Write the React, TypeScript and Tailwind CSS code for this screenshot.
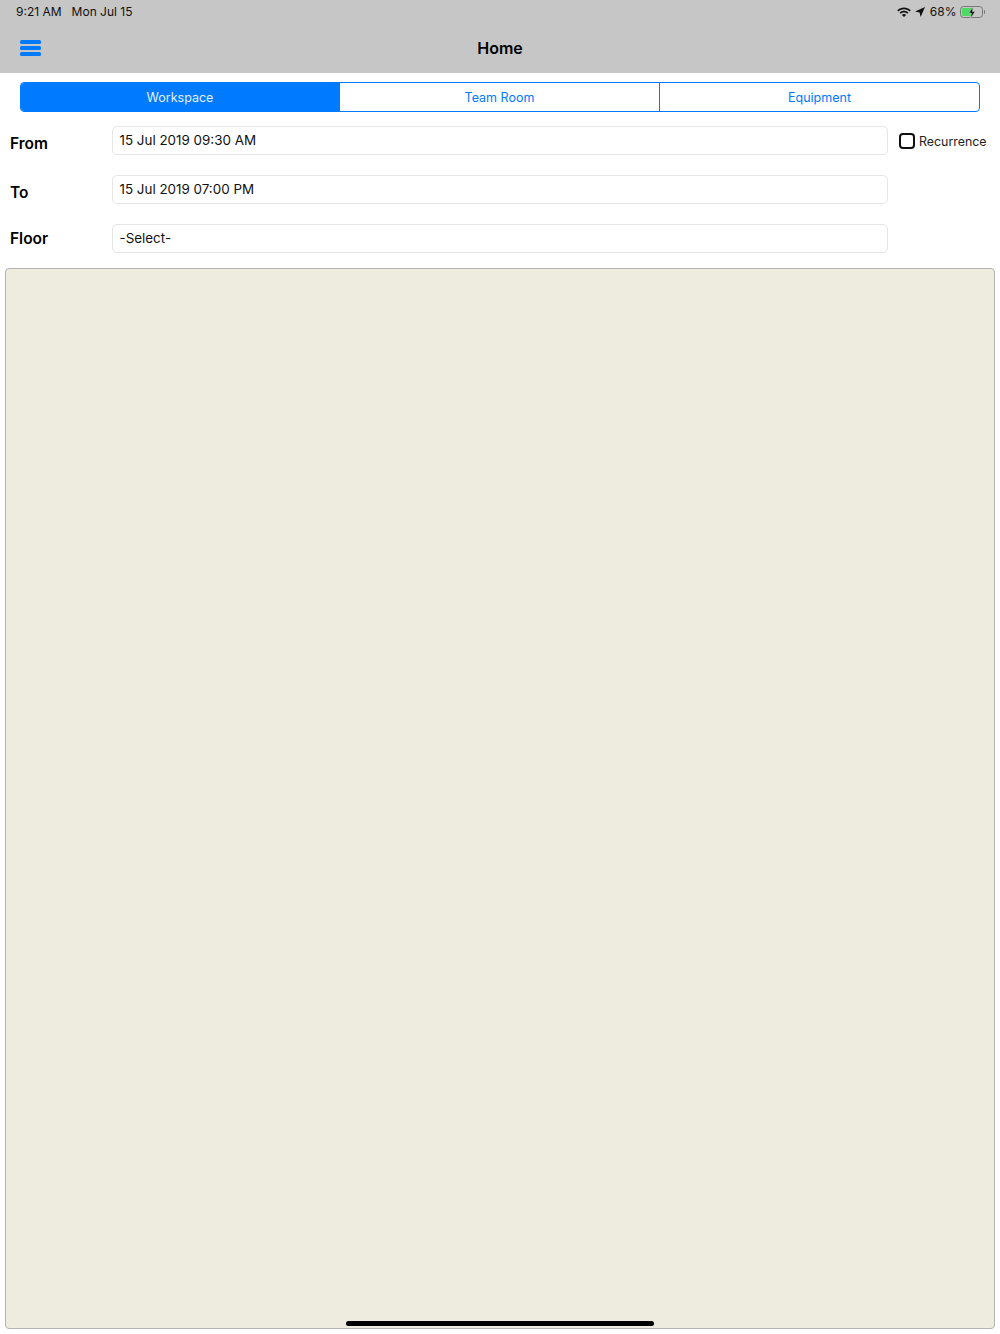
const font = { fontFamily: 'Inter, "Liberation Sans", sans-serif' };

function Field({ label, value, labelClass }: { label: string; value: string; labelClass: string }) {
  return (
    <div className="flex h-[29px] items-center">
      <div className={`w-[112px] pl-[10px] text-[15.5px] font-semibold leading-[20px] text-black ${labelClass}`}>{label}</div>
      <div className="flex h-[29px] w-[776px] items-center rounded-[5px] border border-[#e6e6e6] bg-white pl-[6.5px] text-[13.4px] text-[#111]">
        {value}
      </div>
    </div>
  );
}

export default function App() {
  return (
    <div style={font} className="relative h-[1334px] w-[1000px] overflow-hidden bg-white">
      <header className="h-[73px] bg-[#c6c6c6]">
        <div className="flex h-[24px] items-center justify-between pl-[16px] pr-[15px] text-[12px] text-[#111]">
          <div className="flex gap-[10px]">
            <span>9:21 AM</span>
            <span>Mon Jul 15</span>
          </div>
          <div className="flex items-center">
            <svg width="14" height="10" viewBox="0 0 14 10" className="mr-[4px]">
              <path d="M0.3 3.3C4 -0.4 10 -0.4 13.7 3.3L12.6 4.5C9.5 1.5 4.5 1.5 1.4 4.5Z" fill="#111" />
              <path d="M2.6 5.6C5 3.2 9 3.2 11.4 5.6L10.3 6.8C8.5 5 5.5 5 3.7 6.8Z" fill="#111" />
              <path d="M4.9 7.9C6 6.8 8 6.8 9.1 7.9L7 10Z" fill="#111" />
            </svg>
            <svg width="10" height="10" viewBox="0 0 10 10" className="mr-[5px]">
              <path d="M10 0L5.6 10L4.6 5.4L0 4.4Z" fill="#111" />
            </svg>
            <span className="mr-[3px]">68%</span>
            <div className="relative flex h-[12px] w-[23px] items-center rounded-[3.5px] border border-[#777] p-[1px]">
              <div className="h-full w-[11px] rounded-[1px] bg-[#4cd964]" />
              <svg width="8" height="11" viewBox="0 0 8 11" className="absolute left-[7px] top-0">
                <path d="M5 0L0.8 6H3.4L2.6 11L7.2 4.6H4.4Z" fill="#111" stroke="#c6c6c6" strokeWidth="0.6" />
              </svg>
            </div>
            <div className="ml-[1px] h-[4px] w-[1.5px] rounded-r-sm bg-[#777]" />
          </div>
        </div>
        <div className="relative flex h-[49px] -translate-y-[1px] items-center justify-center">
          <span className="text-[16px] font-semibold text-black">Home</span>
          <div className="absolute left-[20px] top-[17px] flex h-[16px] w-[21px] flex-col justify-between">
            <div className="h-[4px] rounded-[1.5px] bg-[#007aff]" />
            <div className="h-[4px] rounded-[1.5px] bg-[#007aff]" />
            <div className="h-[4px] rounded-[1.5px] bg-[#007aff]" />
          </div>
        </div>
      </header>

      <div className="mx-[20px] mt-[9px] flex h-[30px] overflow-hidden rounded-[4px] border border-[#007aff] text-[12.5px]">
        <div className="flex w-[318px] items-center justify-center bg-[#007aff] pt-[2px] text-[#e4f0ff]">Workspace</div>
        <div className="flex w-[320px] items-center justify-center border-l border-[#007aff] pt-[2px] text-[#007aff]">Team Room</div>
        <div className="flex flex-1 items-center justify-center border-l border-[#007aff] pt-[2px] text-[#007aff]">Equipment</div>
      </div>

      <div className="relative mt-[14px] flex flex-col gap-[20px]">
        <Field label="From" value="15 Jul 2019 09:30 AM" labelClass="translate-y-[3px]" />
        <Field label="To" value="15 Jul 2019 07:00 PM" labelClass="translate-y-[3px]" />
        <Field label="Floor" value="-Select-" labelClass="" />
        <div className="absolute left-[899px] top-[7px] flex items-center">
          <div className="h-[16px] w-[16px] -translate-y-[1px] rounded-[4px] border-2 border-[#111] bg-white" />
          <span className="ml-[4px] text-[12.4px] text-[#222]">Recurrence</span>
        </div>
      </div>

      <div className="mx-[5px] mt-[15px] h-[1061px] rounded-[4px] border border-[#b4b4b0] bg-[#eeebdf]" />

      <div className="absolute left-[346px] top-[1321px] h-[5px] w-[308px] rounded-full bg-black" />
    </div>
  );
}
